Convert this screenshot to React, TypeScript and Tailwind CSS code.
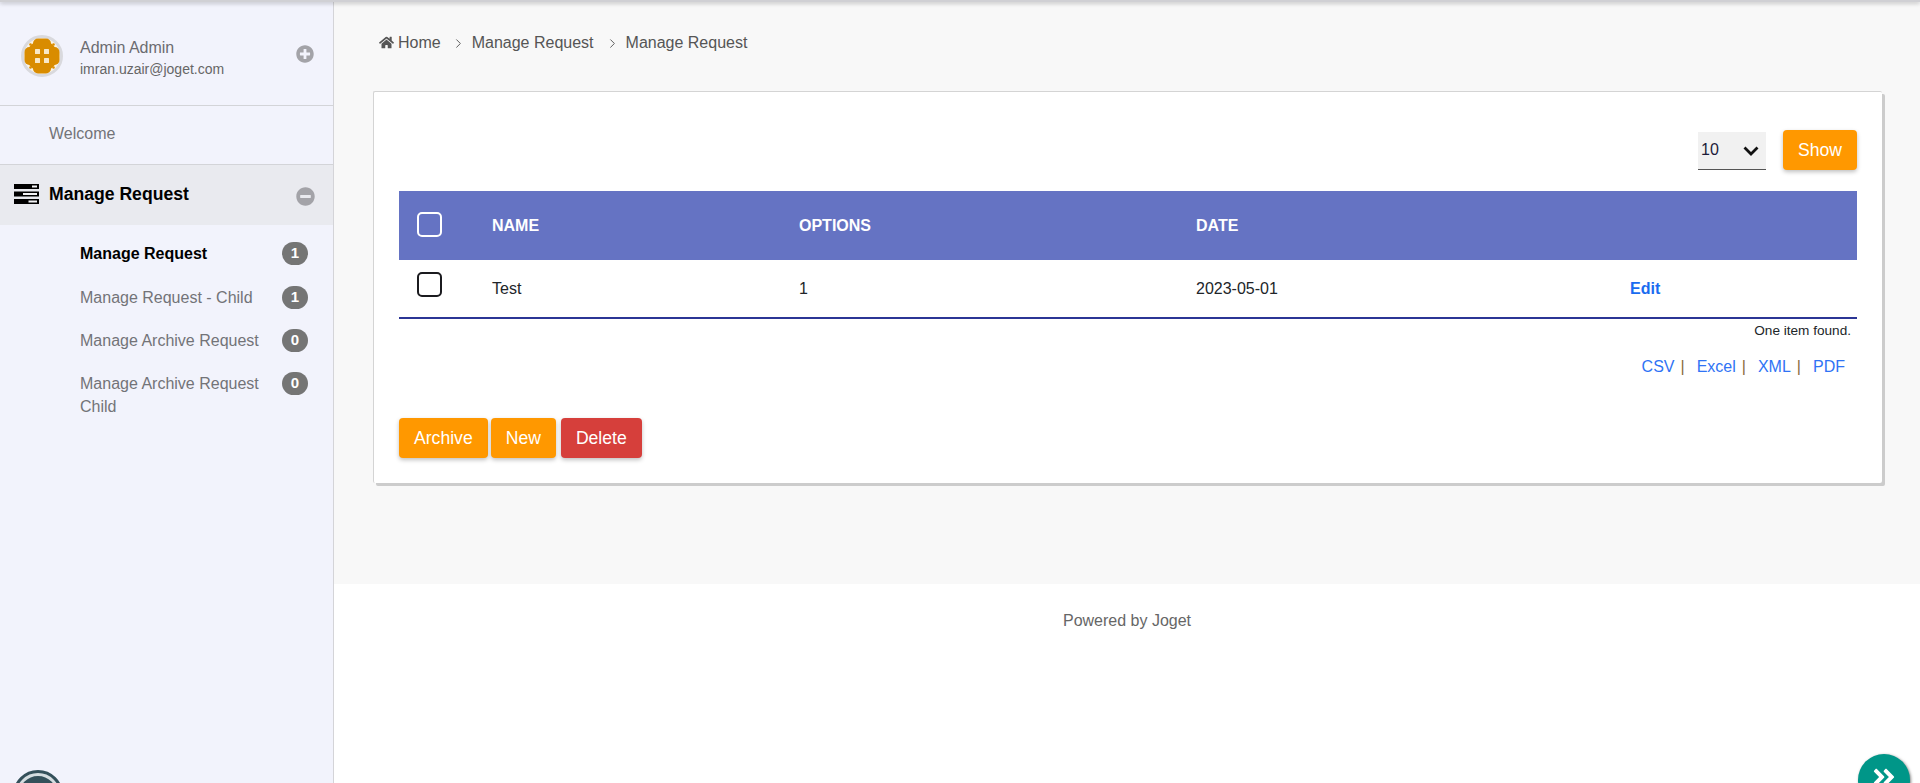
import { ChevronRight } from 'lucide-react';
import { FaAngleDoubleRight, FaHome, FaMinusCircle, FaPlusCircle } from 'react-icons/fa';

const Avatar = () => (
    <svg width="42" height="42" viewBox="0 0 42 42" className="mb-[2px] shrink-0">
        <circle cx="21" cy="21" r="19.5" fill="#fbf4e6" stroke="#d9d9dd" strokeWidth="3" />
        <circle cx="21" cy="21" r="15.5" fill="#d98c00" />
        <rect x="12" y="3.5" width="18" height="35" rx="5" fill="#d98c00" />
        <rect x="3.5" y="12" width="35" height="18" rx="5" fill="#d98c00" />
        <circle cx="9.5" cy="9.5" r="1.3" fill="#d98c00" />
        <circle cx="32.5" cy="9.5" r="1.3" fill="#d98c00" />
        <circle cx="9.5" cy="32.5" r="1.3" fill="#d98c00" />
        <circle cx="32.5" cy="32.5" r="1.3" fill="#d98c00" />
        <rect x="14" y="14" width="5" height="5" rx="0.5" fill="#f8e8c8" />
        <rect x="23" y="14" width="5" height="5" rx="0.5" fill="#f8e8c8" />
        <rect x="14" y="23" width="5" height="5" rx="0.5" fill="#f8e8c8" />
        <rect x="23" y="23" width="5" height="5" rx="0.5" fill="#f8e8c8" />
    </svg>
);

const ServerIcon = () => (
    <svg width="25" height="20" viewBox="0 0 25 20" className="shrink-0">
        <rect x="0" y="0" width="25" height="5" fill="#000" />
        <rect x="0" y="7.5" width="25" height="5" fill="#000" />
        <rect x="0" y="15" width="25" height="5" fill="#000" />
        <rect x="18" y="1.5" width="5" height="2" fill="#f4f4f6" />
        <rect x="9" y="9" width="14" height="2" fill="#f4f4f6" />
        <rect x="14.5" y="16.5" width="8.5" height="2" fill="#f4f4f6" />
    </svg>
);

const SubItem = ({ label, count, active }: { label: string; count: number; active?: boolean }) => (
    <div className="flex items-start justify-between py-[10px] pl-[80px] pr-[25px]">
        <span className={`w-[190px] text-base leading-[23px] ${active ? 'font-bold text-black' : 'text-[#737378]'}`}>
            {label}
        </span>
        <span className="flex h-[23px] w-[26px] items-center justify-center rounded-full bg-[#757575] text-[15px] font-bold text-white">
            {count}
        </span>
    </div>
);

const Sidebar = () => (
    <aside className="h-full w-[334px] shrink-0 border-r border-[#d4d4d8] bg-[#f2f3fc]">
        <div className="flex h-[106px] items-center border-b border-[#d3d4d8] pl-[21px] pr-[19px] pt-[8px]">
            <Avatar />
            <div className="ml-[17px] flex-1 pt-[3px]">
                <div className="text-base leading-[22px] text-[#6b6b70]">Admin Admin</div>
                <div className="text-sm leading-[20px] text-[#666]">imran.uzair@joget.com</div>
            </div>
            <FaPlusCircle className="mb-[6px] text-[18px] text-[#a3a3a8]" />
        </div>
        <div className="flex h-[59px] items-center border-b border-[#d3d4d8] pb-[2px] pl-[49px] text-base text-[#737378]">
            Welcome
        </div>
        <div className="flex h-[60px] items-center bg-[#e9eaef] pb-[2px] pl-[14px] pr-[18px]">
            <ServerIcon />
            <span className="ml-[10px] flex-1 text-[17.6px] font-bold text-black">Manage Request</span>
            <FaMinusCircle className="mt-[4px] text-[19px] text-[#a3a3a8]" />
        </div>
        <div className="pt-[7px]">
            <SubItem label="Manage Request" count={1} active />
            <div className="pt-[1px]">
                <SubItem label="Manage Request - Child" count={1} />
            </div>
            <SubItem label="Manage Archive Request" count={0} />
            <SubItem label="Manage Archive Request Child" count={0} />
        </div>
    </aside>
);

const Crumbs = () => (
    <div className="flex h-[91px] items-start pl-[45px] pt-[32px] text-base leading-[22px] text-[#555]">
        <FaHome className="mt-[3px] text-[15px] text-[#555]" />
        <span className="ml-[4px]">Home</span>
        <ChevronRight className="ml-[10px] mt-[4px]" size={15} strokeWidth={1.5} />
        <span className="ml-[6px]">Manage Request</span>
        <ChevronRight className="ml-[11px] mt-[4px]" size={15} strokeWidth={1.5} />
        <span className="ml-[6px]">Manage Request</span>
    </div>
);

const Btn = ({ label, red, className }: { label: string; red?: boolean; className?: string }) => (
    <button className={`h-[40px] rounded-[4px] px-[15px] text-[17.6px] text-white shadow-[0_2px_4px_rgba(0,0,0,0.25)] ${red ? 'bg-[#d63f3b]' : 'bg-[#ff9800]'} ${className ?? ''}`}>
        {label}
    </button>
);

const Check = ({ dark }: { dark?: boolean }) => (
    <span className={`block h-[25px] w-[25px] rounded-[5px] border-2 ${dark ? 'border-[#1b1b1f]' : 'border-white'}`} />
);

const Card = () => (
    <section className="ml-[39px] mr-[38px] h-[392px] rounded-[2px] border-l border-t border-[#d4d4d4] bg-white px-[25px] pt-[38px] shadow-[3px_3px_0_#cccccc]">
        <div className="flex h-[61px] items-start justify-end gap-[17px]">
            <div className="relative mt-[2px] h-[38px] w-[68px] border-b border-[#555] bg-[#f1f1f1] pl-[3px] text-base leading-[36px] text-[#1c1c3a]">
                10
                <svg width="16" height="10" viewBox="0 0 16 10" className="absolute right-[7px] top-[14px]">
                    <path d="M1.5 1.5l6.5 6.5 6.5-6.5" fill="none" stroke="#111" strokeWidth="2.8" />
                </svg>
            </div>
            <Btn label="Show" />
        </div>
        <table className="w-full table-fixed border-b-2 border-[#2b3595] text-base text-[#212529]">
            <colgroup>
                <col className="w-[81px]" />
                <col className="w-[307px]" />
                <col className="w-[397px]" />
                <col className="w-[434px]" />
                <col />
            </colgroup>
            <thead>
                <tr className="h-[69px] bg-[#6573c3] text-left font-bold text-white">
                    <th className="pb-[2px] pl-[18px]"><Check /></th>
                    <th className="px-[12px]">NAME</th>
                    <th className="px-[12px]">OPTIONS</th>
                    <th className="px-[12px]">DATE</th>
                    <th />
                </tr>
            </thead>
            <tbody>
                <tr className="h-[58px]">
                    <td className="pb-[8px] pl-[18px]"><Check dark /></td>
                    <td className="px-[12px]">Test</td>
                    <td className="px-[12px]">1</td>
                    <td className="px-[12px]">2023-05-01</td>
                    <td className="px-[12px] font-bold text-[#1a6cf0]">Edit</td>
                </tr>
            </tbody>
        </table>
        <div className="mt-[3px] pr-[6px] text-right text-[13.6px] leading-[18px] text-[#212529]">One item found.</div>
        <div className="mt-[16px] flex justify-end pr-[12px] text-base leading-[22px] text-[#2f73f5]">
            <span>CSV</span>
            <span className="ml-[6px] text-[#8a6a3a]">|</span>
            <span className="ml-[12px]">Excel</span>
            <span className="ml-[6px] text-[#8a6a3a]">|</span>
            <span className="ml-[12px]">XML</span>
            <span className="ml-[6px] text-[#8a6a3a]">|</span>
            <span className="ml-[12px]">PDF</span>
        </div>
        <div className="mt-[40px] flex gap-[4px]">
            <Btn label="Archive" className="-mr-[1px]" />
            <Btn label="New" />
            <Btn label="Delete" red className="ml-[1px]" />
        </div>
    </section>
);

const App = () => {
    return (
        <div className="relative flex h-[783px] overflow-hidden bg-white font-['Liberation_Sans',Arial,sans-serif]">
            <div className="absolute inset-x-0 top-0 h-[2px] bg-[#d0d0d4] shadow-[0_1px_4px_rgba(0,0,0,0.35)]" />
            <Sidebar />
            <main className="flex flex-1 flex-col">
                <div className="h-[584px] bg-[#f8f8f8]">
                    <Crumbs />
                    <Card />
                </div>
                <footer className="pt-[27px] text-center text-base leading-[20px] text-[#666]">Powered by Joget</footer>
            </main>
            <div className="absolute left-[13px] top-[770px] h-[50px] w-[50px] rounded-full border-[3px] border-[#34505a] bg-[#34505a]">
                <div className="h-full w-full rounded-full border-[3px] border-[#d5dde0]" />
            </div>
            <div className="absolute left-[1858px] top-[754px] flex h-[52px] w-[52px] justify-center rounded-full bg-[#009688] pt-[10px] text-white shadow-[1px_1px_3px_rgba(0,0,0,0.5)]">
                <FaAngleDoubleRight className="text-[26px]" />
            </div>
        </div>
    );
};

export default App;
